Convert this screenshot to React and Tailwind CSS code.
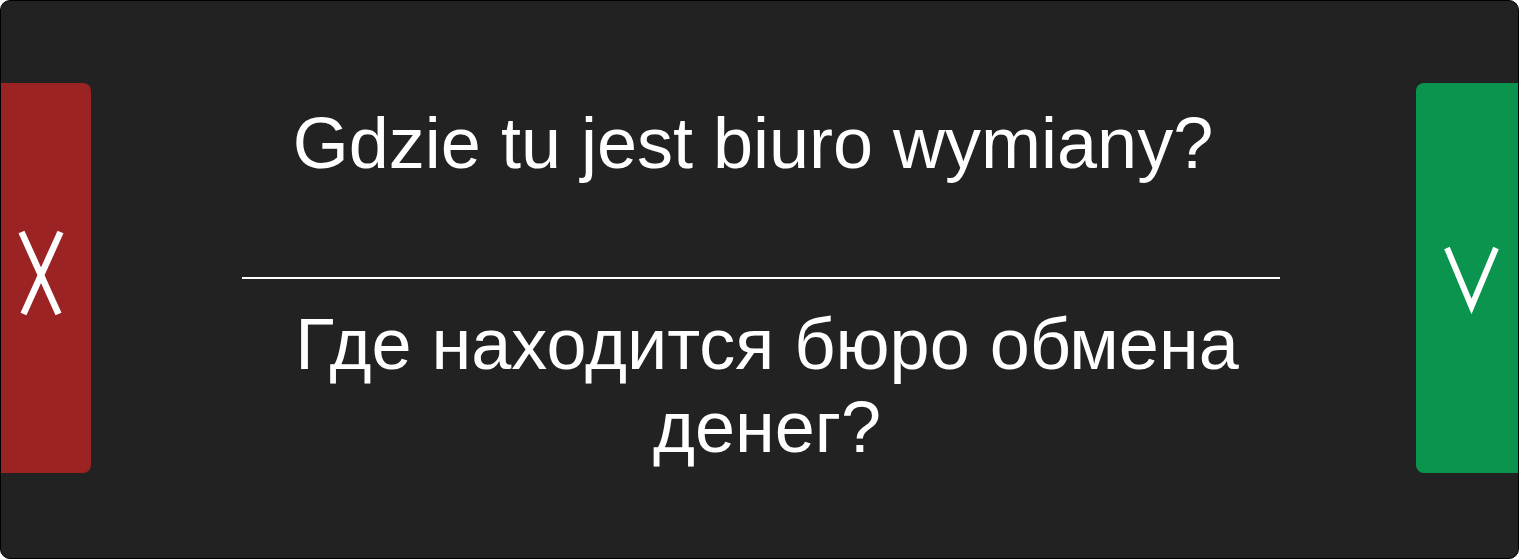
import React from 'react';

const CrossMark = () => (
  <svg width="90" height="390" viewBox="0 0 90 390" aria-label="X" className="block">
    <line x1="20.5" y1="149" x2="57.5" y2="231" stroke="white" strokeWidth="6.5" />
    <line x1="59.5" y1="149" x2="22.5" y2="231" stroke="white" strokeWidth="6.5" />
  </svg>
);

const CheckMark = () => (
  <svg width="102" height="390" viewBox="0 0 102 390" aria-label="V" className="block">
    <polyline
      points="31,165 55.5,223.5 80,165"
      fill="none"
      stroke="white"
      strokeWidth="6"
      strokeLinejoin="miter"
      strokeMiterlimit="10"
    />
  </svg>
);

const FlashCard = ({ front, back, onWrong, onRight }) => {
  return (
    <div className="w-[1519px] h-[559px] bg-[#222222] border border-black rounded-[10px] flex items-start overflow-hidden">
      {/* Wrong answer */}
      <button
        onClick={onWrong}
        className="mt-[82px] w-[90px] h-[390px] shrink-0 bg-[#9b2323] rounded-r-lg"
      >
        <CrossMark />
      </button>

      {/* Card texts */}
      <div className="flex-1 pl-[151px] pr-[136px] pt-[101px]">
        <p className="pr-[16px] text-white text-[72px] leading-[1.15] text-center font-['Liberation_Sans',Arial,sans-serif]">
          {front}
        </p>
        <div className="mt-[92px] h-[2px] bg-white" />
        <p className="mt-[24px] pl-[12px] text-white text-[72px] leading-[1.15] text-center font-['Liberation_Sans',Arial,sans-serif]">
          {back}
        </p>
      </div>

      {/* Right answer */}
      <button
        onClick={onRight}
        className="mt-[82px] w-[102px] h-[390px] shrink-0 bg-[#0b944d] rounded-l-lg"
      >
        <CheckMark />
      </button>
    </div>
  );
};

export default function App() {
  return (
    <FlashCard
      front="Gdzie tu jest biuro wymiany?"
      back="Где находится бюро обмена денег?"
      onWrong={() => {}}
      onRight={() => {}}
    />
  );
}
